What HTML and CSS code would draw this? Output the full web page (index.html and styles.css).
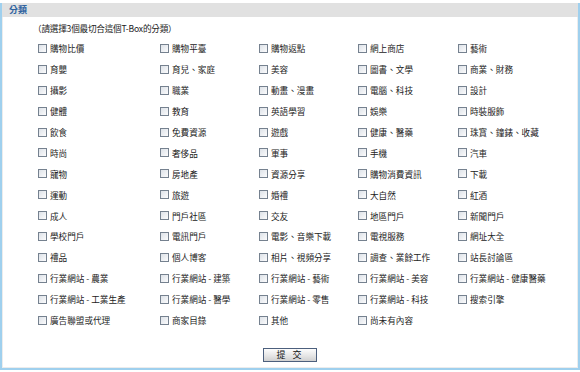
FILE: index.html
```html
<!DOCTYPE html>
<html lang="zh-Hant">
<head>
    <meta charset="UTF-8">
    <meta name="viewport" content="width=device-width, initial-scale=1.0">
    <title>分類</title>
    <link rel="stylesheet" href="styles.css">
</head>
<body>
    <div class="panel">
        <div class="panel-head">分類</div>
        <div class="panel-body">
            <p class="hint">（請選擇3個最切合這個T-Box的分類）</p>
            <ul class="cats">
                <li><label><input type="checkbox"><span>購物比價</span></label></li>
                <li><label><input type="checkbox"><span>購物平臺</span></label></li>
                <li><label><input type="checkbox"><span>購物返點</span></label></li>
                <li><label><input type="checkbox"><span>網上商店</span></label></li>
                <li><label><input type="checkbox"><span>藝術</span></label></li>

                <li><label><input type="checkbox"><span>育嬰</span></label></li>
                <li><label><input type="checkbox"><span>育兒、家庭</span></label></li>
                <li><label><input type="checkbox"><span>美容</span></label></li>
                <li><label><input type="checkbox"><span>圖書、文學</span></label></li>
                <li><label><input type="checkbox"><span>商業、財務</span></label></li>

                <li><label><input type="checkbox"><span>攝影</span></label></li>
                <li><label><input type="checkbox"><span>職業</span></label></li>
                <li><label><input type="checkbox"><span>動畫、漫畫</span></label></li>
                <li><label><input type="checkbox"><span>電腦、科技</span></label></li>
                <li><label><input type="checkbox"><span>設計</span></label></li>

                <li><label><input type="checkbox"><span>健體</span></label></li>
                <li><label><input type="checkbox"><span>教育</span></label></li>
                <li><label><input type="checkbox"><span>英語學習</span></label></li>
                <li><label><input type="checkbox"><span>娛樂</span></label></li>
                <li><label><input type="checkbox"><span>時裝服飾</span></label></li>

                <li><label><input type="checkbox"><span>飲食</span></label></li>
                <li><label><input type="checkbox"><span>免費資源</span></label></li>
                <li><label><input type="checkbox"><span>遊戲</span></label></li>
                <li><label><input type="checkbox"><span>健康、醫藥</span></label></li>
                <li><label><input type="checkbox"><span>珠寶、鐘錶、收藏</span></label></li>

                <li><label><input type="checkbox"><span>時尚</span></label></li>
                <li><label><input type="checkbox"><span>奢侈品</span></label></li>
                <li><label><input type="checkbox"><span>軍事</span></label></li>
                <li><label><input type="checkbox"><span>手機</span></label></li>
                <li><label><input type="checkbox"><span>汽車</span></label></li>

                <li><label><input type="checkbox"><span>寵物</span></label></li>
                <li><label><input type="checkbox"><span>房地產</span></label></li>
                <li><label><input type="checkbox"><span>資源分享</span></label></li>
                <li><label><input type="checkbox"><span>購物消費資訊</span></label></li>
                <li><label><input type="checkbox"><span>下載</span></label></li>

                <li><label><input type="checkbox"><span>運動</span></label></li>
                <li><label><input type="checkbox"><span>旅遊</span></label></li>
                <li><label><input type="checkbox"><span>婚禮</span></label></li>
                <li><label><input type="checkbox"><span>大自然</span></label></li>
                <li><label><input type="checkbox"><span>紅酒</span></label></li>

                <li><label><input type="checkbox"><span>成人</span></label></li>
                <li><label><input type="checkbox"><span>門戶社區</span></label></li>
                <li><label><input type="checkbox"><span>交友</span></label></li>
                <li><label><input type="checkbox"><span>地區門戶</span></label></li>
                <li><label><input type="checkbox"><span>新聞門戶</span></label></li>

                <li><label><input type="checkbox"><span>學校門戶</span></label></li>
                <li><label><input type="checkbox"><span>電訊門戶</span></label></li>
                <li><label><input type="checkbox"><span>電影、音樂下載</span></label></li>
                <li><label><input type="checkbox"><span>電視服務</span></label></li>
                <li><label><input type="checkbox"><span>網址大全</span></label></li>

                <li><label><input type="checkbox"><span>禮品</span></label></li>
                <li><label><input type="checkbox"><span>個人博客</span></label></li>
                <li><label><input type="checkbox"><span>相片、視頻分享</span></label></li>
                <li><label><input type="checkbox"><span>調查、業餘工作</span></label></li>
                <li><label><input type="checkbox"><span>站長討論區</span></label></li>

                <li><label><input type="checkbox"><span>行業網站 - 農業</span></label></li>
                <li><label><input type="checkbox"><span>行業網站 - 建築</span></label></li>
                <li><label><input type="checkbox"><span>行業網站 - 藝術</span></label></li>
                <li><label><input type="checkbox"><span>行業網站 - 美容</span></label></li>
                <li><label><input type="checkbox"><span>行業網站 - 健康醫藥</span></label></li>

                <li><label><input type="checkbox"><span>行業網站 - 工業生產</span></label></li>
                <li><label><input type="checkbox"><span>行業網站 - 醫學</span></label></li>
                <li><label><input type="checkbox"><span>行業網站 - 零售</span></label></li>
                <li><label><input type="checkbox"><span>行業網站 - 科技</span></label></li>
                <li><label><input type="checkbox"><span>搜索引擎</span></label></li>

                <li><label><input type="checkbox"><span>廣告聯盟或代理</span></label></li>
                <li><label><input type="checkbox"><span>商家目錄</span></label></li>
                <li><label><input type="checkbox"><span>其他</span></label></li>
                <li><label><input type="checkbox"><span>尚未有內容</span></label></li>
            </ul>
            <div class="actions">
                <button type="button" class="submit-btn">提 交</button>
            </div>
        </div>
    </div>
</body>
</html>
```

FILE: styles.css
```css
body{
    margin: 0;
    width: 580px;
    height: 372px;
    background: #fff;
    font-family: "Noto Sans CJK TC", "Liberation Sans", sans-serif;
    font-size: 8.6px;
    color: #222;
}
.panel{
    margin-top: 3px;
    height: 365px;
    border: 2px solid #9fd0ee;
    border-top: none;
    display: flex;
    flex-direction: column;
}
.panel-head{
    height: 14px;
    line-height: 14px;
    padding-left: 7px;
    background: #e1e1e1;
    color: #2f63a0;
    font-weight: bold;
    font-size: 9px;
}
.panel-body{
    flex: 1;
    border: 1px solid #ececec;
    border-top: none;
}
.hint{
    margin: 0;
    padding: 6px 0 0 30px;
    height: 15px;
    line-height: 10px;
    letter-spacing: -0.2px;
}
.cats{
    list-style: none;
    margin: 0;
    padding: 0 0 0 35px;
    display: grid;
    grid-template-columns: 122px 99px 99px 100px 1fr;
    grid-auto-rows: 20.9px;
}
.cats li{
    display: flex;
    align-items: center;
}
.cats label{
    display: flex;
    align-items: center;
    gap: 3px;
    white-space: nowrap;
}
.cats input{
    appearance: none;
    -webkit-appearance: none;
    margin: 0;
    width: 9px;
    height: 9px;
    border: 1px solid #75818f;
    background: linear-gradient(135deg, #dde2e8, #fbfbfc);
}
.actions{
    display: flex;
    justify-content: center;
    padding-top: 18px;
}
.submit-btn{
    width: 54px;
    height: 14px;
    padding: 0;
    border: 1px solid #4c5f7d;
    background: linear-gradient(#fdfdfd, #e6e6e6 55%, #d0d0d0);
    font-family: "Noto Sans CJK TC", sans-serif;
    font-size: 9px;
    line-height: 12px;
    color: #111;
    letter-spacing: 2px;
    word-spacing: 1px;
}
```
